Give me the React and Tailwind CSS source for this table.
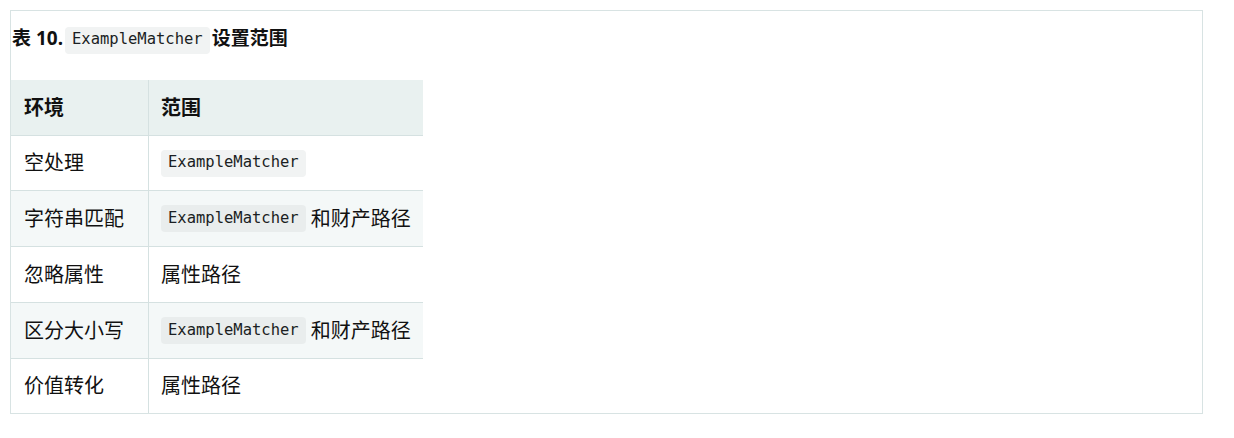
const rows = [
  { env: "空处理", code: true, rest: "", h: "h-[55px]", stripe: false },
  { env: "字符串匹配", code: true, rest: "和财产路径", h: "h-[56px]", stripe: true },
  { env: "忽略属性", code: false, rest: "属性路径", h: "h-[56px]", stripe: false },
  { env: "区分大小写", code: true, rest: "和财产路径", h: "h-[56px]", stripe: true },
  { env: "价值转化", code: false, rest: "属性路径", h: "h-[54px]", stripe: false, last: true },
];

function Code({ dark }) {
  return (
    <code
      className={`inline-flex items-center h-[27px] px-[7px] rounded-[4px] text-[15.5px] text-[#1b1f23] font-['DejaVu_Sans_Mono',monospace] ${
        dark ? "bg-[#e9eded]" : "bg-[#f1f3f3]"
      }`}
    >
      ExampleMatcher
    </code>
  );
}

export default function App() {
  return (
    <div className="min-h-screen bg-white font-['Noto_Sans','Noto_Sans_CJK_SC',sans-serif] text-[#111]">
      <div className="ml-[10px] mt-[10px] w-[1193px] border border-[#d8e3e3]">
        <div className="pt-[14px] pl-[1px] h-[69px]">
          <div className="flex items-center h-[27px] text-[19px] font-bold">
            <span>表 10.</span>
            <span className="ml-[2px] font-normal">
              <Code />
            </span>
            <span className="ml-[2px]">设置范围</span>
          </div>
        </div>

        <div className="w-[412px] text-[20px]">
          <div className="flex h-[56px] bg-[#e9f1f0] border-b border-[#d5e1e1] font-bold">
            <div className="w-[138px] border-r border-[#d5e1e1] pl-[13px] flex items-center">环境</div>
            <div className="flex-1 pl-[12px] flex items-center">范围</div>
          </div>
          {rows.map((r) => (
            <div
              key={r.env}
              className={`flex ${r.h} ${r.last ? "" : "border-b border-[#d5e1e1]"} ${
                r.stripe ? "bg-[#f4f8f8]" : "bg-white"
              }`}
            >
              <div className="w-[138px] border-r border-[#d5e1e1] pl-[13px] flex items-center">{r.env}</div>
              <div className="flex-1 pl-[12px] flex items-center">
                {r.code && <Code dark={r.stripe} />}
                {r.rest && <span className={r.code ? "ml-[5px]" : ""}>{r.rest}</span>}
              </div>
            </div>
          ))}
        </div>
      </div>
    </div>
  );
}
